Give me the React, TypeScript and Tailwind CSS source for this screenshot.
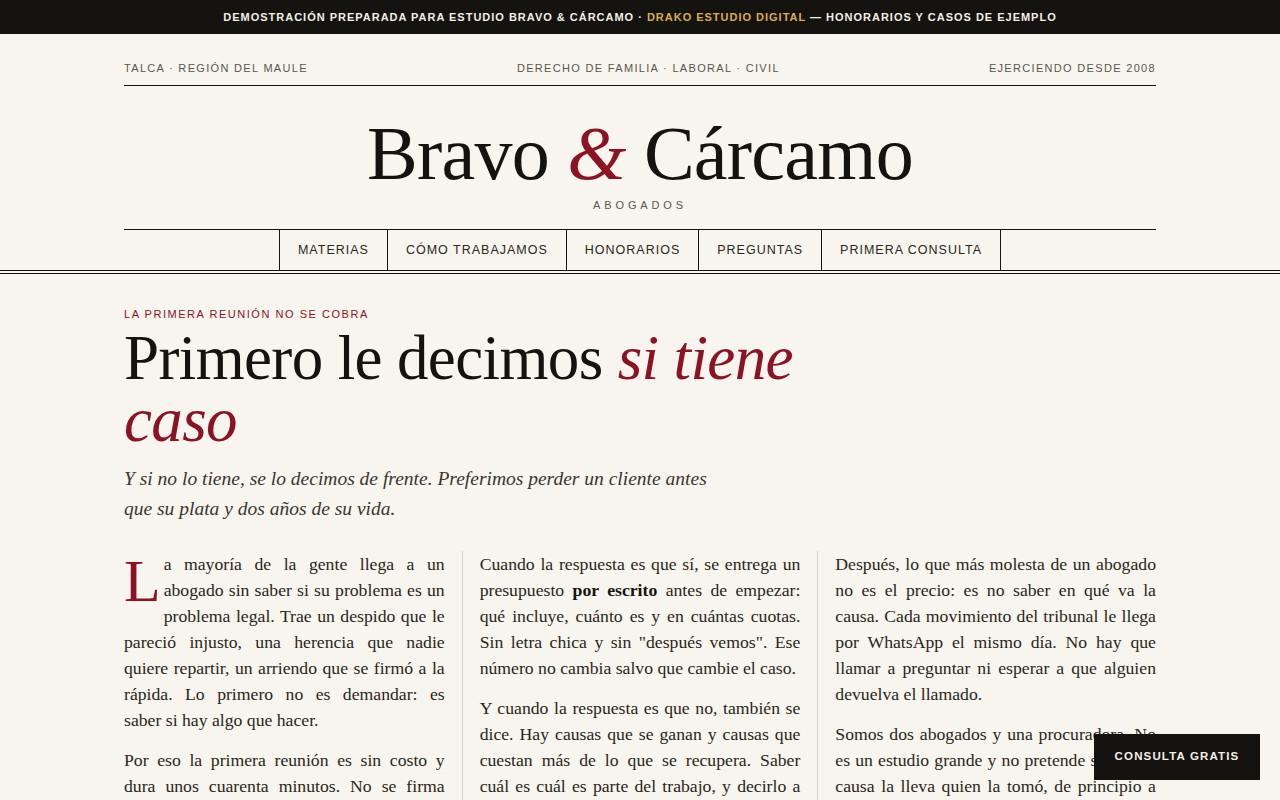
import React from "react";

const sans = "font-['Liberation_Sans',Arial,sans-serif]";
const serif = "font-['Liberation_Serif','Times_New_Roman',serif]";

const navItems = ["Materias", "Cómo trabajamos", "Honorarios", "Preguntas", "Primera consulta"];

const TopBar = () => (
  <div
    className={`${sans} bg-[#15130f] h-[34px] flex items-center justify-center text-[11px] font-bold tracking-[0.09em] uppercase text-[#f3efe6]`}
  >
    <span>
      Demostración preparada para Estudio Bravo &amp; Cárcamo ·{" "}
      <span className="text-[#d9ad4b]">Drako Estudio Digital</span> — honorarios y casos de ejemplo
    </span>
  </div>
);

const Header = () => (
  <header className="border-b-4 border-double border-[#15130f]">
    <div className="max-w-[1032px] mx-auto">
      <div
        className={`${sans} flex justify-between items-center pt-[26px] pb-[9px] border-b border-[#15130f] text-[11px] tracking-[0.12em] uppercase text-[#5b564c] leading-4`}
      >
        <span>Talca · Región del Maule</span>
        <span>Derecho de familia · Laboral · Civil</span>
        <span>Ejerciendo desde 2008</span>
      </div>
      <h1
        className={`${serif} mt-[29px] text-center text-[76px] leading-none text-[#15130f] tracking-[-0.01em]`}
      >
        Bravo <span className="italic text-[#8c1326]">&amp;</span> Cárcamo
      </h1>
      <p
        className={`${sans} mt-[6px] pb-4 text-center text-[11px] leading-4 tracking-[0.35em] uppercase text-[#5b564c] border-b border-[#15130f]`}
      >
        Abogados
      </p>
      <nav className="flex justify-center">
        <ul className={`${sans} flex border-l border-[#15130f] text-[12.5px] tracking-[0.08em] uppercase text-[#2a2620]`}>
          {navItems.map((item) => (
            <li key={item} className="h-[40px] px-[18px] flex items-center border-r border-[#15130f]">
              {item}
            </li>
          ))}
        </ul>
      </nav>
    </div>
  </header>
);

const Hero = () => (
  <section className="max-w-[1032px] mx-auto pt-8">
    <p className={`${sans} text-[11px] leading-4 tracking-[0.14em] uppercase text-[#8c1326]`}>
      La primera reunión no se cobra
    </p>
    <h2 className={`${serif} mt-[5px] max-w-[720px] text-[63px] leading-[62px] text-[#15130f] tracking-[-0.01em]`}>
      Primero le decimos <em className="text-[#8c1326]">si tiene caso</em>
    </h2>
    <p className={`${serif} mt-[13px] max-w-[590px] italic text-[19.5px] leading-[30px] text-[#3a362f]`}>
      Y si no lo tiene, se lo decimos de frente. Preferimos perder un cliente antes que su plata y dos años de su vida.
    </p>
  </section>
);

const Body = () => (
  <section
    className={`${serif} max-w-[1032px] mx-auto mt-[27px] grid grid-cols-[1fr_1px_1fr_1px_1fr] gap-x-[17px] text-[17.7px] leading-[26px] text-[#2a2620] text-justify`}
  >
    <div className="flex flex-col gap-[14px]">
      <p>
        <span className="float-left text-[60px] leading-[52px] mt-[4px] mr-[3px] text-[#8c1326]">L</span>
        a mayoría de la gente llega a un abogado sin saber si su problema es un problema legal. Trae un despido que le
        pareció injusto, una herencia que nadie quiere repartir, un arriendo que se firmó a la rápida. Lo primero no es
        demandar: es saber{"\u00a0"}si hay algo que hacer.
      </p>
      <p>
        Por eso la primera reunión es sin costo y dura unos cuarenta minutos. No se firma nada ni se paga nada: se
        escucha el caso completo.
      </p>
    </div>
    <div className="bg-[#d9d4ca] min-h-[260px]" />
    <div className="flex flex-col gap-[14px]">
      <p>
        Cuando la respuesta es que sí, se entrega un presupuesto <strong className="text-[#15130f]">por escrito</strong>{" "}
        antes de empezar: qué incluye, cuánto es y en cuántas cuotas. Sin letra chica y sin "después vemos". Ese número
        no cambia salvo que cambie el caso.
      </p>
      <p>
        Y cuando la respuesta es que no, también se dice. Hay causas que se ganan y causas que cuestan más de lo que se
        recupera. Saber cuál es cuál es parte del trabajo, y decirlo a tiempo también.
      </p>
    </div>
    <div className="bg-[#d9d4ca]" />
    <div className="flex flex-col gap-[14px]">
      <p>
        Después, lo que más molesta de un abogado no es el precio: es no saber en qué va la causa. Cada movimiento del
        tribunal le llega por WhatsApp el mismo día. No hay que llamar a preguntar ni esperar a que alguien devuelva el
        llamado.
      </p>
      <p>
        Somos dos abogados y una procuradora. No es un estudio grande y no pretende ser. Cada causa la lleva quien la
        tomó, de principio a fin.
      </p>
    </div>
  </section>
);

export default function App() {
  return (
    <div className="min-h-screen bg-[#f8f5ee] pb-24">
      <TopBar />
      <Header />
      <Hero />
      <Body />
      <a
        href="#consulta"
        className={`${sans} fixed right-5 bottom-5 w-[166px] h-[46px] flex items-center justify-center bg-[#15130f] text-[#f3efe6] text-[11.5px] font-bold tracking-[0.1em] uppercase`}
      >
        Consulta gratis
      </a>
    </div>
  );
}
